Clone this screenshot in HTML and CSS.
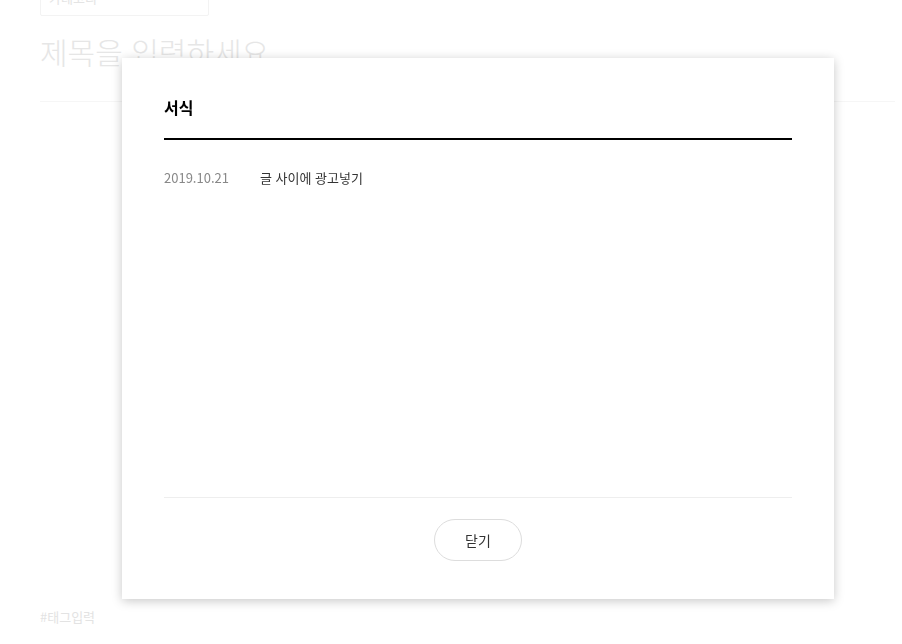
FILE: index.html
```html
<!DOCTYPE html>
<html lang="ko">
<head>
  <meta charset="UTF-8">
  <title>글쓰기</title>
  <link rel="stylesheet" href="styles.css">
</head>
<body>
  <div class="editor">
    <div class="category">
      <span>카테고리</span>
      <span class="caret"></span>
    </div>
    <input class="post-title" type="text" placeholder="제목을 입력하세요">
    <div class="post-body"></div>
    <div class="tags">#태그입력</div>
  </div>

  <!-- 서식 모달 -->
  <div class="dimmed">
    <section class="layer">
      <h2 class="layer-title">서식</h2>
      <ul class="template-list">
        <li>
          <span class="date">2019.10.21</span>
          <span class="name">글 사이에 광고넣기</span>
        </li>
      </ul>
      <div class="layer-foot">
        <button class="btn-close" type="button">닫기</button>
      </div>
    </section>
  </div>
</body>
</html>
```

FILE: styles.css
```css
* {
  box-sizing: border-box;
}

html, body {
  margin: 0;
  padding: 0;
  background: #fff;
  font-family: "Noto Sans CJK KR", "Noto Sans", sans-serif;
  color: #333;
  overflow: hidden;
}

.editor {
  margin-top: -22px;
  padding: 0 7px 0 40px;
  height: 666px;
  display: flex;
  flex-direction: column;
}

.category {
  width: 169px;
  height: 38px;
  border: 1px solid #f3f3f3;
  border-radius: 2px;
  display: flex;
  align-items: center;
  justify-content: space-between;
  padding: 0 12px 0 8px;
  font-size: 13px;
  color: #e4e4e4;
}

.caret {
  width: 6px;
  height: 6px;
  border-right: 1px solid #e6e6e6;
  border-bottom: 1px solid #e6e6e6;
  transform: rotate(45deg);
  margin-top: -4px;
}

.post-title {
  margin-top: 13px;
  border: none;
  border-bottom: 1px solid #f6f6f6;
  padding: 0 0 28px;
  font-family: inherit;
  font-size: 30px;
  font-weight: 300;
  outline: none;
  background: transparent;
}

.post-title::placeholder {
  color: #e6e6e6;
}

.post-body {
  flex: 1;
}

.tags {
  font-size: 13px;
  color: #e3e3e3;
  padding-bottom: 18px;
}

.dimmed {
  position: fixed;
  inset: 0;
}

.layer {
  position: absolute;
  top: 58px;
  left: 122px;
  width: 712px;
  height: 541px;
  background: #fff;
  box-shadow: 0 2px 10px rgba(0, 0, 0, 0.22);
  padding: 0 42px;
  display: flex;
  flex-direction: column;
}

.layer-title {
  margin: 0;
  padding: 38px 0 20px;
  font-size: 16px;
  font-weight: bold;
  color: #000;
  line-height: 22px;
  border-bottom: 2px solid #000;
}

.template-list {
  list-style: none;
  margin: 0;
  padding: 28px 0 0;
  flex: 1;
}

.template-list li {
  display: flex;
  font-size: 13px;
  line-height: 20px;
}

.date {
  width: 96px;
  color: #888;
}

.name {
  color: #333;
}

.layer-foot {
  border-top: 1px solid #eee;
  padding: 21px 0 38px;
  display: flex;
  justify-content: center;
}

.btn-close {
  width: 88px;
  height: 42px;
  border: 1px solid #ddd;
  border-radius: 21px;
  background: #fff;
  font-family: inherit;
  font-size: 14px;
  color: #333;
  cursor: pointer;
}
```
